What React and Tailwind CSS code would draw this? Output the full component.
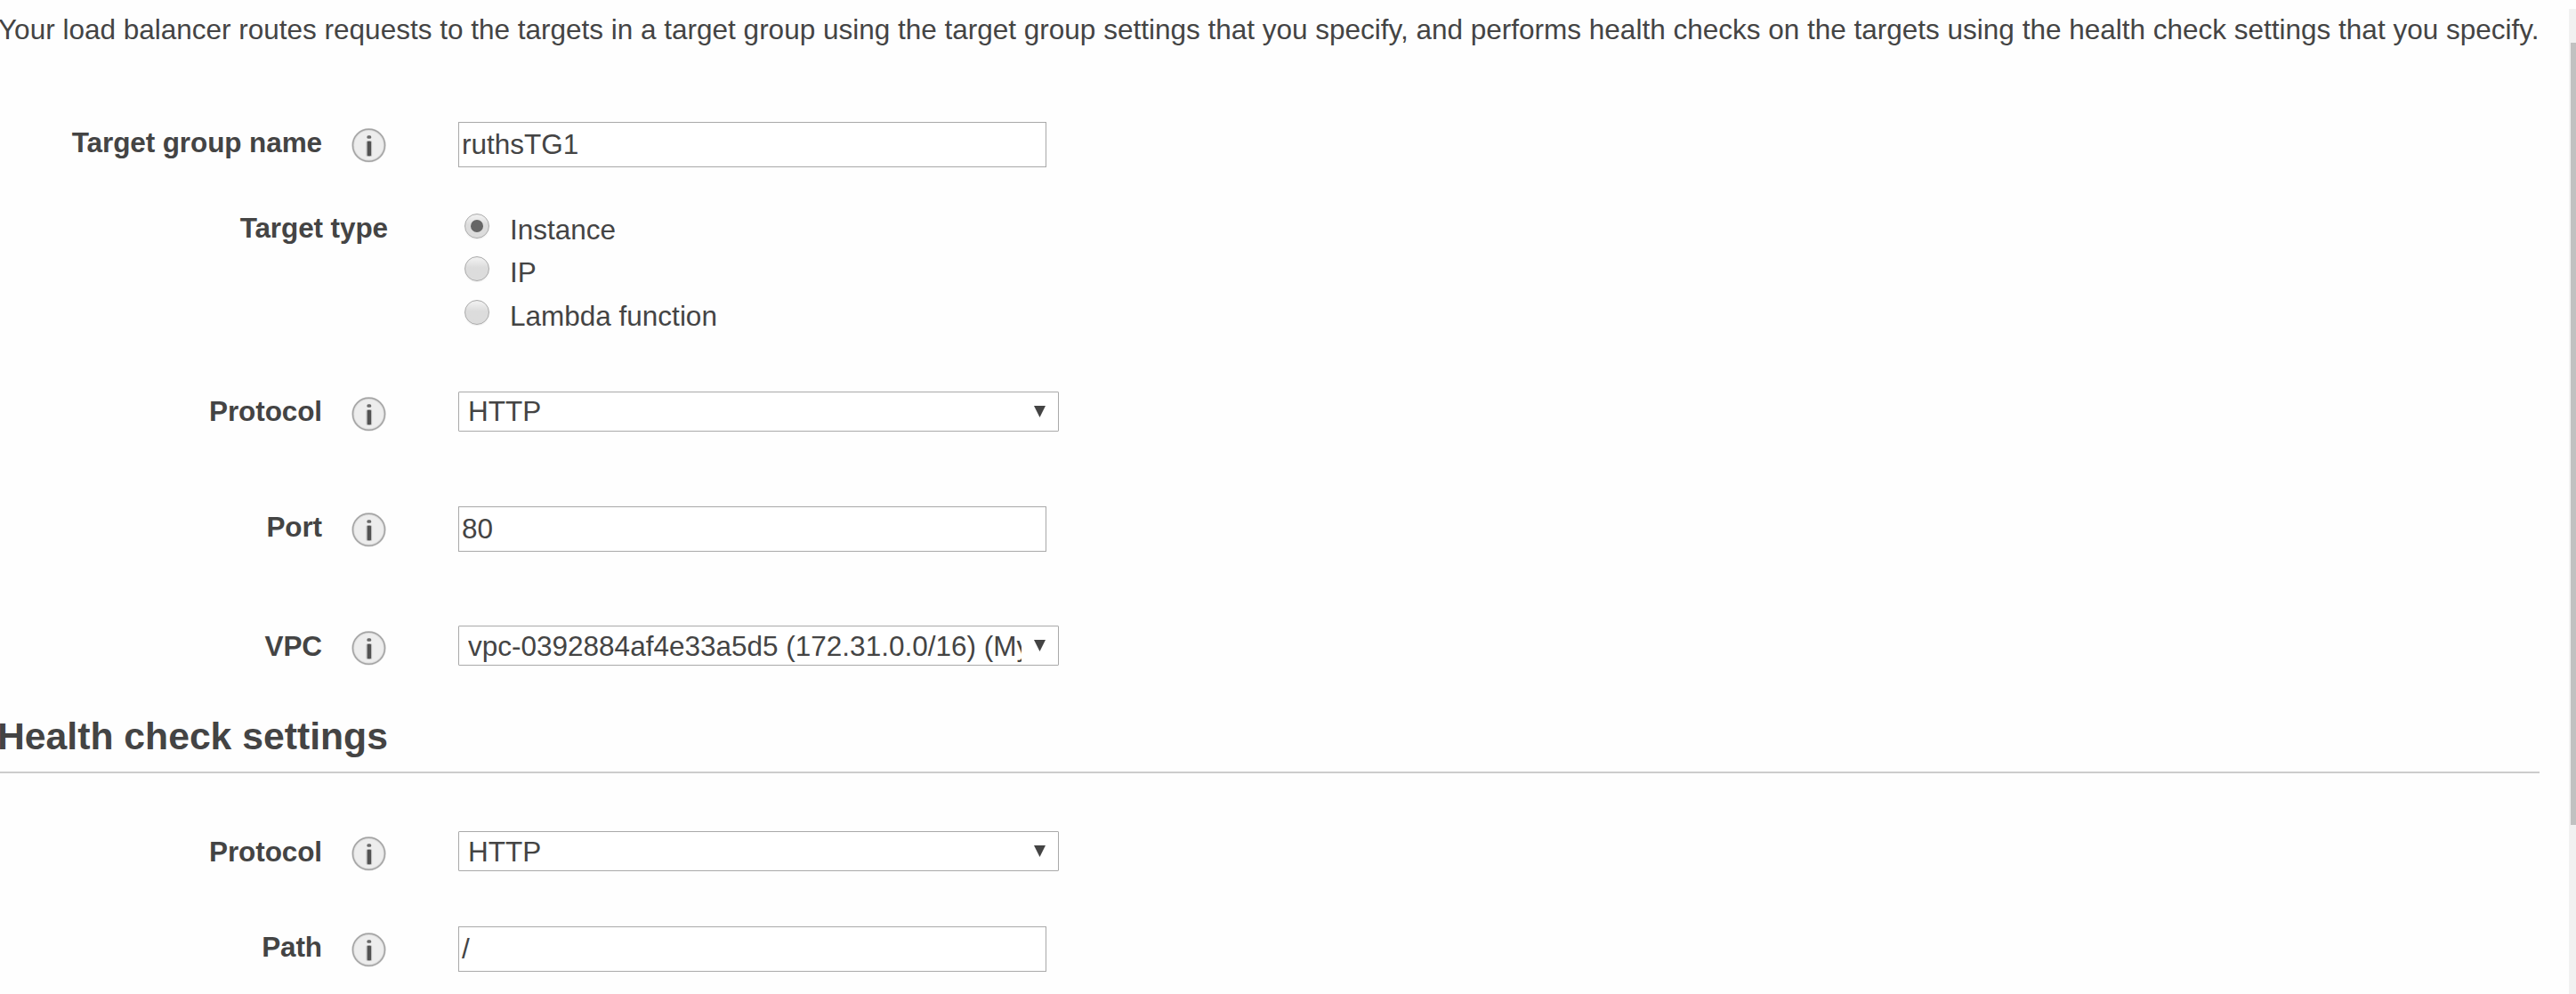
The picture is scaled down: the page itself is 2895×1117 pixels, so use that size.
function InfoIcon() {
  return (
    <svg className="h-[39px] w-[39px] shrink-0" viewBox="0 0 39 39" aria-label="Info">
      <circle cx="19.5" cy="19.3" r="17.8" fill="#ededed" stroke="#dddddd" strokeWidth="3" />
      <circle cx="19.5" cy="19.3" r="18" fill="none" stroke="#a3a3a3" strokeWidth="1.5" />
      <rect x="16.5" y="14.2" width="6.6" height="17.6" rx="1.5" fill="#bdbdbd" />
      <rect x="17.8" y="14.8" width="4.2" height="16.4" rx="1" fill="#525252" />
      <rect x="17.4" y="8.2" width="4.8" height="3.6" rx="1.5" fill="#6a6a6a" />
    </svg>
  );
}

function Field({ label, className, labelPad = "pt-[5px]", iconPad = "pt-[7px]", children }) {
  return (
    <div className={`flex items-start ${className}`}>
      <div className={`w-[362px] shrink-0 text-right font-bold tracking-[-0.1px] ${labelPad}`}>{label}</div>
      <div className={`ml-[33px] mr-[81px] ${iconPad}`}>
        <InfoIcon />
      </div>
      {children}
    </div>
  );
}

function TextBox({ value }) {
  return (
    <div className="h-[51px] w-[661px] whitespace-nowrap border border-[#a9a9a9] bg-white pl-[3px] pt-[6px]">
      {value}
    </div>
  );
}

function SelectBox({ value, pad = "pt-[4px]" }) {
  return (
    <div className="flex h-[45px] w-[675px] rounded-[1px] border border-[#a9a9a9] bg-white pl-[10px]">
      <div className={`h-[43px] w-[622px] overflow-hidden whitespace-nowrap ${pad}`}>{value}</div>
      <svg className="ml-[14px] mt-[15px] h-[13px] w-[13px]" viewBox="0 0 13 13">
        <path d="M0 0H13L6.5 13Z" fill="#444" />
      </svg>
    </div>
  );
}

function Radio({ label, checked, className }) {
  return (
    <div className={`flex items-start ${className}`}>
      <div className="flex h-7 w-7 items-center justify-center rounded-full border border-[#aaa] bg-linear-to-b from-[#eeeeee] from-10% to-[#dcdcdc] to-45% shadow-[0_1px_1px_#eee]">
        {checked && <div className="h-3.5 w-3.5 rounded-full bg-[#666]" />}
      </div>
      <div className="ml-[23px]">{label}</div>
    </div>
  );
}

export default function App() {
  return (
    <div className="flex h-[1117px] w-[2895px] justify-between overflow-hidden bg-[#fefefe] font-['Liberation_Sans',Arial,sans-serif] text-[31.5px] leading-9 text-[#444]">
      <main className="w-[2854px]">
        <p className="-ml-[2px] mt-[15px] whitespace-nowrap">
          Your load balancer routes requests to the targets in a target group using the target group settings that you specify, and performs health checks on the targets using the health check settings that you specify.
        </p>
        <Field label="Target group name" className="mt-[86px] h-[51px]">
          <TextBox value="ruthsTG1" />
        </Field>
        <div className="mt-[50px] flex h-[134px] items-start">
          <div className="w-[436px] text-right font-bold tracking-[-0.1px]">Target type</div>
          <div className="ml-[86px] pt-[2px]">
            <Radio label="Instance" checked className="h-12" />
            <Radio label="IP" className="h-[49px]" />
            <Radio label="Lambda function" />
          </div>
        </div>
        <Field label="Protocol" className="mt-[68px] h-[45px]" labelPad="pt-[4px]" iconPad="pt-[6px]">
          <SelectBox value="HTTP" pad="pt-[3px]" />
        </Field>
        <Field label="Port" className="mt-[84px] h-[51px]">
          <TextBox value="80" />
        </Field>
        <Field label="VPC" className="mt-[83px] h-[45px]" iconPad="pt-[6px]">
          <SelectBox value="vpc-0392884af4e33a5d5 (172.31.0.0/16) (My" />
        </Field>
        <h2 className="-ml-[3px] mt-[54px] h-[65px] whitespace-nowrap text-[42.7px] font-bold leading-[50px]">
          Health check settings
        </h2>
        <hr className="border-t-2 border-[#ccc]" />
        <Field label="Protocol" className="mt-[65px] h-[45px]" iconPad="pt-[6px]">
          <SelectBox value="HTTP" />
        </Field>
        <Field label="Path" className="mt-[62px] h-[51px]">
          <TextBox value="/" />
        </Field>
      </main>
      <div className="mt-[10px] w-2 bg-[#f1f1f1] pl-[2px] pt-[38px]">
        <div className="h-[879px] bg-[#c1c1c1]" />
      </div>
    </div>
  );
}
